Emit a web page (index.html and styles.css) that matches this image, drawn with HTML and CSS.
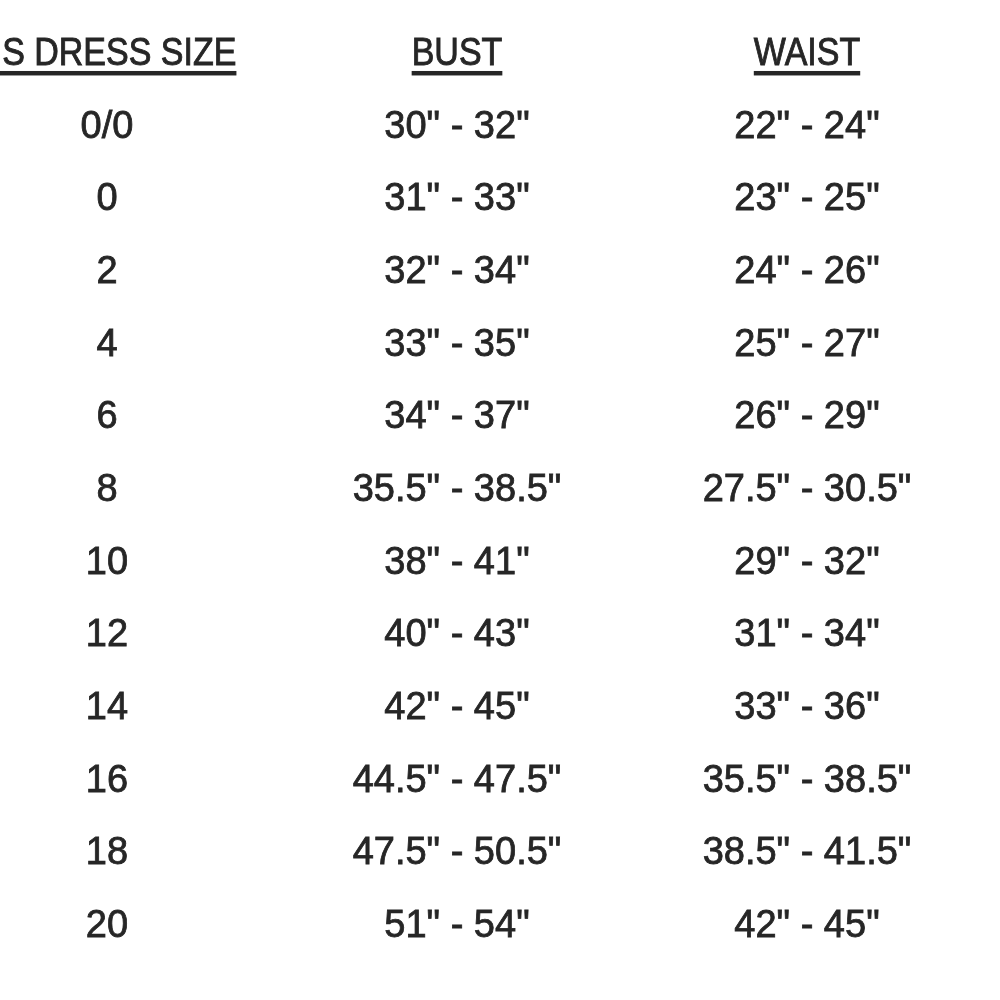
FILE: index.html
```html
<!DOCTYPE html>
<html>
<head>
<meta charset="utf-8">
<link rel="stylesheet" href="styles.css">
</head>
<body>
<div class="chart">
  <div class="head">US DRESS SIZE</div><div class="head">BUST</div><div class="head">WAIST</div>
  <div class="cell">0/0</div><div class="cell">30" - 32"</div><div class="cell">22" - 24"</div>
  <div class="cell">0</div><div class="cell">31" - 33"</div><div class="cell">23" - 25"</div>
  <div class="cell">2</div><div class="cell">32" - 34"</div><div class="cell">24" - 26"</div>
  <div class="cell">4</div><div class="cell">33" - 35"</div><div class="cell">25" - 27"</div>
  <div class="cell">6</div><div class="cell">34" - 37"</div><div class="cell">26" - 29"</div>
  <div class="cell">8</div><div class="cell">35.5" - 38.5"</div><div class="cell">27.5" - 30.5"</div>
  <div class="cell">10</div><div class="cell">38" - 41"</div><div class="cell">29" - 32"</div>
  <div class="cell">12</div><div class="cell">40" - 43"</div><div class="cell">31" - 34"</div>
  <div class="cell">14</div><div class="cell">42" - 45"</div><div class="cell">33" - 36"</div>
  <div class="cell">16</div><div class="cell">44.5" - 47.5"</div><div class="cell">35.5" - 38.5"</div>
  <div class="cell">18</div><div class="cell">47.5" - 50.5"</div><div class="cell">38.5" - 41.5"</div>
  <div class="cell">20</div><div class="cell">51" - 54"</div><div class="cell">42" - 45"</div>
</div>
</body>
</html>
```
FILE: styles.css
```css
html, body {
  margin: 0;
  padding: 0;
  background: #ffffff;
  overflow: hidden;
}
.chart {
  display: grid;
  grid-template-columns: repeat(3, 350px);
  grid-auto-rows: 72.7px;
  align-items: center;
  justify-items: center;
  margin-left: -68px;
  padding-top: 16px;
  font-family: "Liberation Sans", Arial, sans-serif;
  color: #262626;
  white-space: nowrap;
  -webkit-text-stroke: 0.8px #262626;
  filter: blur(0.4px);
}
.head {
  font-size: 34px;
  text-decoration: underline;
  text-decoration-thickness: 4px;
  text-underline-offset: 5px;
  transform: scaleY(1.12);
}
.cell {
  font-size: 38px;
}
```
